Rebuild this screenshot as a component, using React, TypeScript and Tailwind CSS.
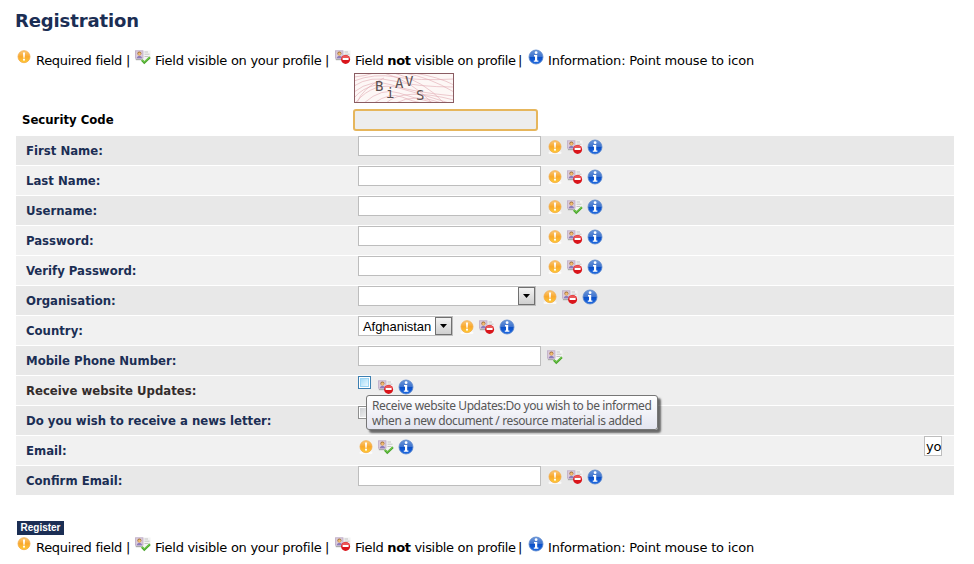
import React from 'react';

type IconKind = 'required' | 'visible' | 'hidden' | 'info';

interface Field {
    label: string;
    rowClass: string;
    icons: IconKind[];
    control?: React.ReactNode;
    trailing?: React.ReactNode;
}

const RequiredIcon = () => (
    <svg className="block shrink-0" width="16" height="16" viewBox="0 0 16 16">
        <defs>
            <linearGradient id="orange" x1="0" y1="0" x2="0" y2="1">
                <stop offset="0" stopColor="#fbc878" />
                <stop offset="0.5" stopColor="#f9a82c" />
                <stop offset="1" stopColor="#ffcb35" />
            </linearGradient>
        </defs>
        <rect x="1.5" y="12.5" width="13" height="2.5" rx="1.2" fill="#fff" fillOpacity="0.75" />
        <circle cx="8" cy="7.7" r="6" fill="url(#orange)" stroke="#f2ab45" strokeWidth="0.8" />
        <path d="M6.9 3.5h2.2l-.5 5.2H7.4z" fill="#fff" />
        <circle cx="8" cy="10.7" r="1.1" fill="#fff" />
    </svg>
);

const ProfileCard = () => (
    <>
        <rect x="0.3" y="1.5" width="15.2" height="9.5" fill="#f4f4f4" />
        <rect x="0.6" y="1.8" width="7.4" height="7.4" fill="#dccbd9" stroke="#b5a3c2" strokeWidth="0.7" />
        <circle cx="4.4" cy="4.4" r="2" fill="#a0703c" />
        <circle cx="4.5" cy="5" r="1.4" fill="#f3bd72" />
        <path d="M1.8 9.2c.2-1.900 1.400-2.200 2.600-2.200s2.400.3 2.600 2.200z" fill="#8c7cba" />
        <path d="M9.500 3h3.500M9.500 5.200h5M9.500 7.500h4" stroke="#c4c4c4" strokeWidth="1" />
        <path d="M0.800 10.600h6" stroke="#aaa" strokeWidth="1.200" />
    </>
);

const VisibleIcon = () => (
    <svg className="block shrink-0" width="16" height="16" viewBox="0 0 16 16">
        <ProfileCard />
        <path d="M6.800 11 9.300 13.600 15 8.300" fill="none" stroke="#4aa42c" strokeWidth="2.200" />
        <path d="M7 10.700 9.300 12.900 14.700 8" fill="none" stroke="#80d858" strokeWidth="1" />
    </svg>
);

const HiddenIcon = () => (
    <svg className="block shrink-0" width="16" height="16" viewBox="0 0 16 16">
        <ProfileCard />
        <circle cx="10.600" cy="10.400" r="4.500" fill="#d9151b" />
        <path d="M6.600 9.200a4.200 4.200 0 0 1 8 0z" fill="#ec5656" />
        <rect x="7.600" y="9" width="6" height="2" fill="#fff" />
    </svg>
);

const InfoIcon = () => (
    <svg className="block shrink-0" width="16" height="16" viewBox="0 0 16 16">
        <defs>
            <linearGradient id="blue" x1="0" y1="0" x2="0" y2="1">
                <stop offset="0" stopColor="#6a96db" />
                <stop offset="0.48" stopColor="#3f74ce" />
                <stop offset="0.52" stopColor="#0b50c8" />
                <stop offset="1" stopColor="#1f6ae2" />
            </linearGradient>
        </defs>
        <circle cx="8" cy="8" r="7" fill="url(#blue)" stroke="#5a86ca" strokeWidth="0.8" />
        <circle cx="8.100" cy="3.700" r="1.400" fill="#fff" />
        <path d="M6 6.100h3.200v5.300h1.200v1.300H5.800v-1.300H7V7.400H6z" fill="#fff" />
    </svg>
);

const icons: Record<IconKind, React.FC> = {
    required: RequiredIcon,
    visible: VisibleIcon,
    hidden: HiddenIcon,
    info: InfoIcon,
};

const TextInput = () => (
    <input type="text" className="block w-[183px] h-5 mr-1.5 bg-white border border-[#bdbdbd] outline-none" />
);

const DropButton = () => (
    <span className="flex items-center justify-center w-[17px] h-[18px] border border-[#707070] bg-linear-to-b from-[#f3f3f3] to-[#cfcfcf]">
        <svg width="7" height="4" viewBox="0 0 7 4"><path d="M0 0h7L3.500 4z" fill="#000" /></svg>
    </span>
);

const Legend = () => (
    <div className="flex h-[22px] text-[13px] leading-[24px] text-black whitespace-nowrap">
        <div className="w-5"><RequiredIcon /></div>
        <div className="w-[90px] tracking-[-0.29px]">Required field</div>
        <div className="w-[9px]">|</div>
        <div className="w-5"><VisibleIcon /></div>
        <div className="w-[170px] tracking-[-0.28px]">Field visible on your profile</div>
        <div className="w-2.5">|</div>
        <div className="w-5"><HiddenIcon /></div>
        <div className="w-[163px] tracking-[-0.32px]">Field <b>not</b> visible on profile</div>
        <div className="w-2.5">|</div>
        <div className="w-5"><InfoIcon /></div>
        <div className="tracking-[-0.19px]">Information: Point mouse to icon</div>
    </div>
);

const Captcha = () => (
    <svg className="block" width="100" height="30" viewBox="0 0 100 30">
        <rect width="100" height="30" fill="#fdf7f6" />
        <g fill="none" stroke="#e0a9b2" strokeWidth="0.600">
            <path d="M0 8Q20 0 42 4T100 6M0 13Q16 2 40 8T100 14M0 19Q18 5 38 12T100 23M2 29Q20 8 45 15T95 30M10 30Q28 14 45 20T82 30M20 30Q36 19 48 24T68 30" />
            <path d="M50 0Q75 4 100 19M60 0Q85 4 100 12M40 0Q70 8 90 30M30 0Q58 8 78 30M0 4Q12 3 20 0M0 25Q8 15 22 12M3 30Q8 15 30 5M32 30Q50 14 100 27M42 30Q60 20 88 30" />
        </g>
        <g fontFamily="DejaVu Sans Mono, monospace" fontSize="14" fill="#5a5050">
            <text x="21" y="18">B</text>
            <text x="32" y="25">i</text>
            <text x="41" y="15">A</text>
            <text x="51" y="13">V</text>
            <text x="62" y="27">S</text>
        </g>
        <rect x="0.500" y="0.500" width="99" height="29" fill="none" stroke="#8a5c62" />
    </svg>
);

const fields: Field[] = [
    { label: 'First Name:', rowClass: 'bg-[#e8e8e8]', icons: ['required', 'hidden', 'info'], control: <TextInput /> },
    { label: 'Last Name:', rowClass: 'bg-[#f1f1f1]', icons: ['required', 'hidden', 'info'], control: <TextInput /> },
    { label: 'Username:', rowClass: 'bg-[#e8e8e8]', icons: ['required', 'visible', 'info'], control: <TextInput /> },
    { label: 'Password:', rowClass: 'bg-[#f1f1f1]', icons: ['required', 'hidden', 'info'], control: <TextInput /> },
    { label: 'Verify Password:', rowClass: 'bg-[#f1f1f1]', icons: ['required', 'hidden', 'info'], control: <TextInput /> },
    {
        label: 'Organisation:',
        rowClass: 'bg-[#e8e8e8]',
        icons: ['required', 'hidden', 'info'],
        control: (
            <div className="flex justify-end w-[178px] h-5 mr-1.5 bg-white border border-[#bdbdbd]">
                <DropButton />
            </div>
        ),
    },
    {
        label: 'Country:',
        rowClass: 'bg-[#f1f1f1]',
        icons: ['required', 'hidden', 'info'],
        control: (
            <div className="flex justify-between w-[95px] h-5 mr-1.5 bg-white border border-[#bdbdbd]">
                <span className="pl-1 font-['Liberation_Sans',Arial,sans-serif] text-[13px] leading-[19px] tracking-[-0.05px] text-black">Afghanistan</span>
                <DropButton />
            </div>
        ),
    },
    { label: 'Mobile Phone Number:', rowClass: 'bg-[#e8e8e8]', icons: ['visible'], control: <TextInput /> },
    {
        label: 'Receive website Updates:',
        rowClass: 'bg-[#eeeeee] text-[#332c2c]',
        icons: ['hidden', 'info'],
        control: (
            <div className="size-[13px] mr-[7px] p-px bg-white border border-[#3c7fb1]">
                <div className="size-full border border-[#9bd5f5] bg-linear-to-br from-[#a5dcf8] to-[#eaf8ff]" />
            </div>
        ),
    },
    {
        label: 'Do you wish to receive a news letter:',
        rowClass: 'bg-[#e8e8e8]',
        icons: [],
        control: (
            <div className="size-[13px] p-px bg-white border border-[#8e8f8f]">
                <div className="size-full bg-linear-to-br from-[#cccfd3] to-[#f5f5f5]" />
            </div>
        ),
    },
    {
        label: 'Email:',
        rowClass: 'bg-[#f1f1f1]',
        icons: ['required', 'visible', 'info'],
        trailing: (
            <div className="w-[18px] h-5 ml-auto mr-3 pl-px overflow-hidden bg-white border border-[#bdbdbd] text-[13px] leading-5 tracking-[-0.3px] text-black">you</div>
        ),
    },
    { label: 'Confirm Email:', rowClass: 'bg-[#e8e8e8]', icons: ['required', 'hidden', 'info'], control: <TextInput /> },
];

const FieldRow: React.FC<{ field: Field }> = ({ field }) => (
    <div className={`flex h-[29px] text-[#1b2e54] ${field.rowClass}`}>
        <div className="w-[342px] pl-2.5 font-['DejaVu_Sans_Condensed','DejaVu_Sans',Tahoma,sans-serif] font-stretch-condensed text-[13px] leading-[29px] font-bold whitespace-nowrap">{field.label}</div>
        {field.control}
        <div className="flex gap-1 pt-[3px]">
            {field.icons.map(kind => {
                const Icon = icons[kind];
                return <Icon key={kind} />;
            })}
        </div>
        {field.trailing}
    </div>
);

export default function App() {
    return (
        <div className="w-[974px] h-[564px] overflow-hidden bg-white pl-4 font-['DejaVu_Sans',Verdana,sans-serif]">
            <h1 className="h-[49px] pt-[9px] -ml-px text-[18px] leading-6 font-bold tracking-[-0.13px] text-[#1b2e54]">Registration</h1>
            <Legend />

            {/* Security code */}
            <div className="flex h-[65px] pt-0.5">
                <div className="w-[337px] pl-1.5 pt-[39px] font-['DejaVu_Sans_Condensed','DejaVu_Sans',Tahoma,sans-serif] font-stretch-condensed text-[13px] leading-4 font-bold text-black">Security Code</div>
                <div>
                    <div className="pl-px"><Captcha /></div>
                    <input type="text" className="block w-[185px] h-[22px] mt-1.5 bg-[#ededed] border-2 border-[#e6b65c] rounded-[3px] outline-none" />
                </div>
            </div>

            {/* Form rows */}
            <div className="relative flex flex-col gap-px w-[938px]">
                {fields.map(field => (
                    <FieldRow key={field.label} field={field} />
                ))}

                {/* Tooltip */}
                <div className="absolute left-[350px] top-[259px] w-[292px] h-[35px] pl-[5px] pt-0.5 border border-[#767676] rounded-[3px] bg-linear-to-b from-white to-[#e4e5f0] shadow-[3px_3px_2px_rgba(0,0,0,0.55)] font-['Noto_Sans','Open_Sans',sans-serif] text-[12px] leading-[15px] tracking-[-0.39px] text-[#575757] whitespace-nowrap">
                    Receive website Updates:Do you wish to be informed<br />
                    when a new document / resource material is added
                </div>
            </div>

            <button className="block mt-[26px] w-[47px] h-3.5 ml-px bg-[#1b2e54] font-['Liberation_Sans',Arial,sans-serif] text-[10px] leading-[14px] font-bold text-white">Register</button>
            <div className="mt-px"><Legend /></div>
        </div>
    );
}
